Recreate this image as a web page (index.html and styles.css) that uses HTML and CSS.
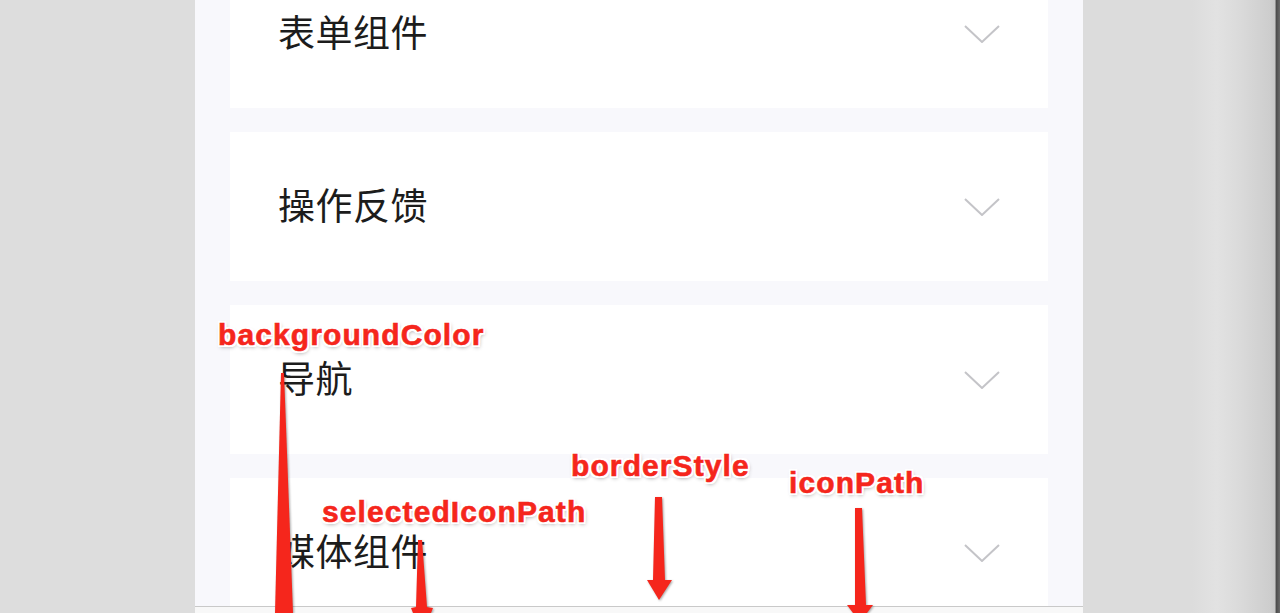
FILE: index.html
```html
<!DOCTYPE html>
<html lang="zh-Hans">
<head>
  <meta charset="UTF-8">
  <meta name="viewport" content="width=device-width, initial-scale=1.0">
  <title>tabBar</title>
  <link rel="stylesheet" href="styles.css">
</head>
<body>
  <div class="stage">
    <div class="side side-left"></div>

    <div class="phone">
      <div class="page">
        <ul class="menu">
          <li class="card">
            <span class="card-title">表单组件</span>
            <svg class="chevron" viewBox="0 0 36 18"><polyline points="1,1 18,17 35,1"/></svg>
          </li>
          <li class="card">
            <span class="card-title">操作反馈</span>
            <svg class="chevron" viewBox="0 0 36 18"><polyline points="1,1 18,17 35,1"/></svg>
          </li>
          <li class="card">
            <span class="card-title">导航</span>
            <svg class="chevron" viewBox="0 0 36 18"><polyline points="1,1 18,17 35,1"/></svg>
          </li>
          <li class="card">
            <span class="card-title">媒体组件</span>
            <svg class="chevron" viewBox="0 0 36 18"><polyline points="1,1 18,17 35,1"/></svg>
          </li>
        </ul>
      </div>
      <div class="tabbar"></div>
    </div>

    <div class="side side-right"></div>

    <!-- 标注层 -->
    <div class="notes">
      <svg class="arrows" viewBox="0 0 1280 613">
        <polygon points="281,373 284,373 293,613 275,613"/>
        <polygon points="418,540 422,540 427,607 433,608 431,613 413,613 411,608 416,607"/>
        <polygon points="655,497 662,497 665,580 672,580 659,600 647,580 653,580"/>
        <polygon points="855,508 862,508 866,605 873,605 867,613 853,613 847,605 855,605"/>
      </svg>
      <span class="note note-bg">backgroundColor</span>
      <span class="note note-border">borderStyle</span>
      <span class="note note-icon">iconPath</span>
      <span class="note note-selected">selectedIconPath</span>
    </div>
  </div>
</body>
</html>
```

FILE: styles.css
```css
html, body {
  margin: 0;
  padding: 0;
  height: 100%;
  overflow: hidden;
  font-family: "Noto Sans CJK SC", "Liberation Sans", sans-serif;
  background-color: #dddddd;
}

.stage {
  position: relative;
  display: flex;
  height: 613px;
}

.side-left {
  width: 195px;
  background-color: #dddddd;
}

.side-right {
  flex: 1;
  background: linear-gradient(to right, #dcdcdc 0, #dcdcdc 55%, #e2e2e2 68%, #dadada 80%, #cdcdcd 95%, #c6c6c6 97.5%, #4a4a4a 98%, #6a6a6a 100%);
}

.phone {
  width: 888px;
  display: flex;
  flex-direction: column;
  background-color: #f8f8fc;
}

.page {
  flex: 1;
  overflow: hidden;
}

.menu {
  list-style: none;
  margin: -41px 0 0 0;
  padding: 0 35px;
  display: flex;
  flex-direction: column;
  gap: 24px;
}

.card {
  height: 149px;
  flex: none;
  background-color: #ffffff;
  display: flex;
  align-items: center;
  justify-content: space-between;
  padding: 0 48px;
}

.card-title {
  font-size: 37px;
  color: #1c1c1c;
  letter-spacing: 0.5px;
  padding-bottom: 6px;
}

.chevron {
  width: 36px;
  height: 18px;
  fill: none;
  stroke: #c4c4c8;
  stroke-width: 2;
}

.tabbar {
  height: 6px;
  border-top: 1px solid #c9c9c9;
  background-color: #f8f8f8;
}

/* 标注 */
.notes {
  position: absolute;
  inset: 0;
  pointer-events: none;
}

.arrows {
  position: absolute;
  left: 0;
  top: 0;
  width: 1280px;
  height: 613px;
  fill: #f5261c;
  filter: drop-shadow(1px 1px 1px rgba(0, 0, 0, 0.35));
}

.note {
  position: absolute;
  font-family: "Liberation Sans", Arial, sans-serif;
  font-weight: bold;
  font-size: 30px;
  line-height: 34px;
  letter-spacing: 1.1px;
  color: #f5261c;
  -webkit-text-stroke: 0.6px #f5261c;
  white-space: nowrap;
  text-shadow:
    2px 0 #fff, -2px 0 #fff, 0 2px #fff, 0 -2px #fff,
    2px 2px #fff, -2px -2px #fff, 2px -2px #fff, -2px 2px #fff,
    1px 2px 4px rgba(0, 0, 0, 0.45);
}

.note-bg { left: 218px; top: 318px; }
.note-border { left: 571px; top: 449px; }
.note-icon { left: 789px; top: 466px; }
.note-selected { left: 322px; top: 495px; }
```
